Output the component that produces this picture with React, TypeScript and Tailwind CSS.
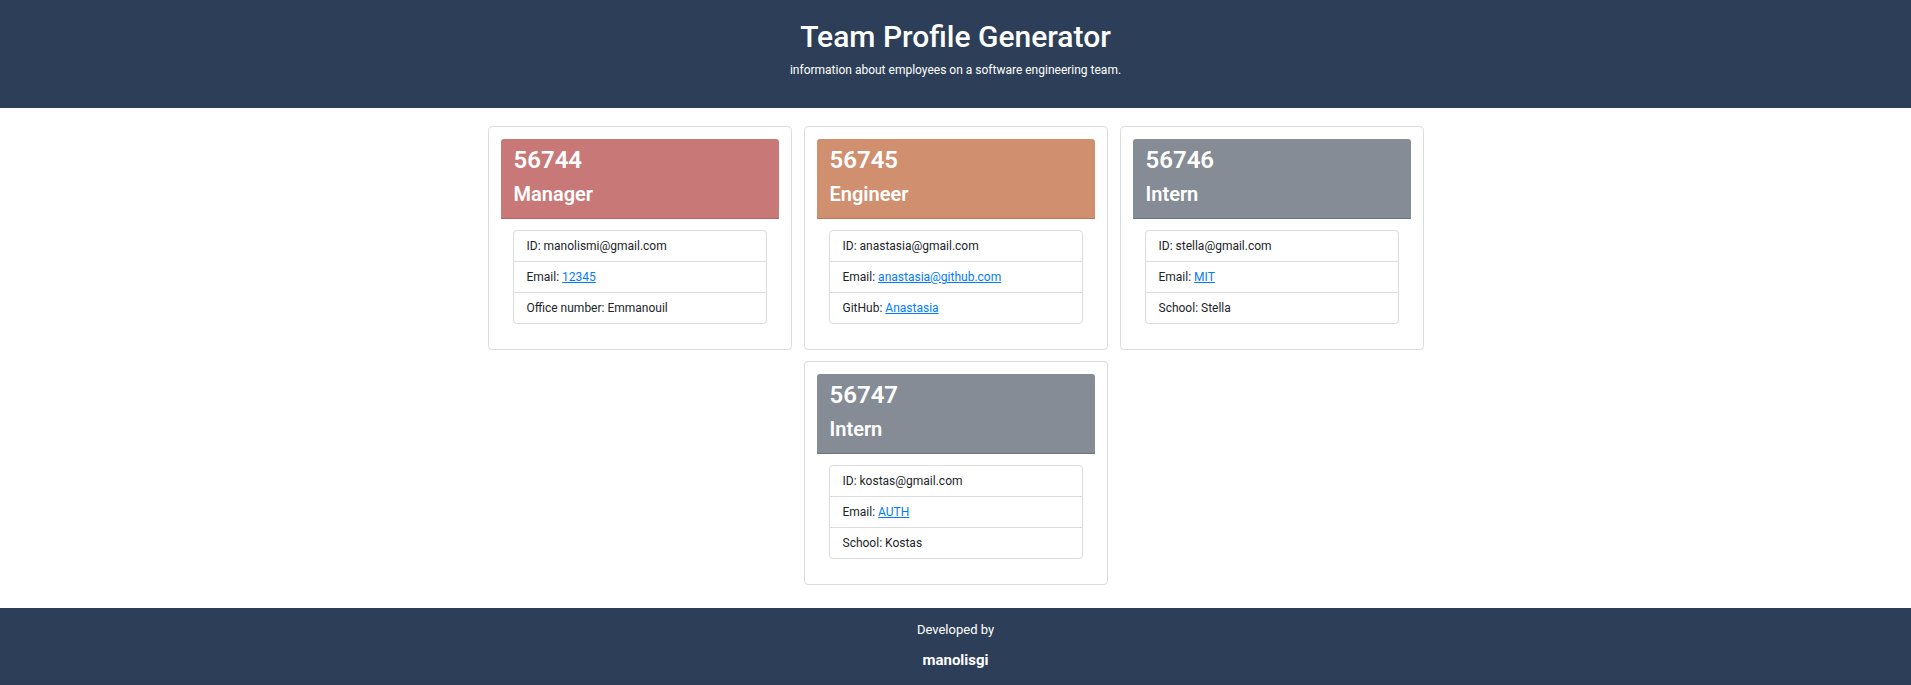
import React from "react";

type Member = {
  id: string;
  role: string;
  tone: string;
  rows: { label: string; value: string; link?: boolean }[];
};

const team: Member[] = [
  {
    id: "56744",
    role: "Manager",
    tone: "bg-[#c97878] border-[#b56464]",
    rows: [
      { label: "ID", value: "manolismi@gmail.com" },
      { label: "Email", value: "12345", link: true },
      { label: "Office number", value: "Emmanouil" },
    ],
  },
  {
    id: "56745",
    role: "Engineer",
    tone: "bg-[#d08f6f] border-[#bb7a5b]",
    rows: [
      { label: "ID", value: "anastasia@gmail.com" },
      { label: "Email", value: "anastasia@github.com", link: true },
      { label: "GitHub", value: "Anastasia", link: true },
    ],
  },
  {
    id: "56746",
    role: "Intern",
    tone: "bg-[#858c96] border-[#6f7680]",
    rows: [
      { label: "ID", value: "stella@gmail.com" },
      { label: "Email", value: "MIT", link: true },
      { label: "School", value: "Stella" },
    ],
  },
  {
    id: "56747",
    role: "Intern",
    tone: "bg-[#858c96] border-[#6f7680]",
    rows: [
      { label: "ID", value: "kostas@gmail.com" },
      { label: "Email", value: "AUTH", link: true },
      { label: "School", value: "Kostas" },
    ],
  },
];

function ProfileCard({ member }: { member: Member }) {
  return (
    <div className="w-[304px] border border-[#dcdcdc] rounded-[4px] bg-white p-[12px] pb-[25px]">
      <div className={`rounded-t-[3px] border-b px-[13px] pt-[6px] pb-[9px] text-white ${member.tone}`}>
        <h3 className="text-[24px] leading-[30px] font-semibold">{member.id}</h3>
        <h5 className="mt-[4px] text-[20px] leading-[30px] font-semibold">{member.role}</h5>
      </div>
      <ul className="mx-[12px] mt-[11px] border border-[#dcdcdc] rounded-[4px] text-[12px] text-[#212529]">
        {member.rows.map((row, i) => (
          <li
            key={row.label}
            className={`box-content h-[30px] flex items-center px-[13px] ${i > 0 ? "border-t border-[#dcdcdc]" : ""}`}
          >
            {row.label}:&nbsp;
            {row.link ? (
              <a href="#" className="text-[#007bff] underline">
                {row.value}
              </a>
            ) : (
              row.value
            )}
          </li>
        ))}
      </ul>
    </div>
  );
}

export default function App() {
  return (
    <div
      className="min-h-[685px] flex flex-col bg-white"
      style={{ fontFamily: '"Segoe UI", Roboto, "Helvetica Neue", Arial, sans-serif' }}
    >
      <header className="h-[108px] bg-[#2d3f58] text-white flex flex-col items-center pt-[17px]">
        <h1 className="text-[30px] leading-[40px] font-medium">Team Profile Generator</h1>
        <p className="mt-[3px] text-[12px] leading-[20px]">information about employees on a software engineering team.</p>
      </header>

      <main className="flex-1 pt-[18px] pb-[23px]">
        <div className="w-[936px] mx-auto flex flex-wrap justify-center gap-x-[12px] gap-y-[11px]">
          {team.map((m) => (
            <ProfileCard key={m.id} member={m} />
          ))}
        </div>
      </main>

      <footer className="h-[77px] bg-[#2d3f58] text-white flex flex-col items-center pt-[12px]">
        <p className="text-[13px] leading-[20px]">Developed by</p>
        <p className="mt-[10px] text-[15px] leading-[20px] font-bold">manolisgi</p>
      </footer>
    </div>
  );
}
